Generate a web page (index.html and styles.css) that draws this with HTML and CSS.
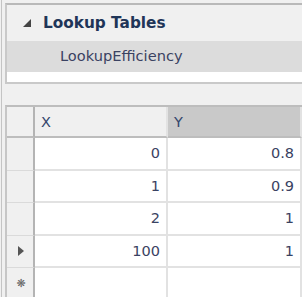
FILE: index.html
```html
<!DOCTYPE html>
<html lang="en">
<head>
    <meta charset="UTF-8">
    <title>Lookup Tables</title>
    <link rel="stylesheet" href="styles.css">
</head>
<body>

<div class="frame">
    <!-- 樹狀清單 -->
    <div class="tree-panel">
        <div class="tree-group">
            <span class="expander"></span>
            <span class="group-title">Lookup Tables</span>
        </div>
        <div class="tree-item selected">LookupEfficiency</div>
        <div class="tree-spacer"></div>
    </div>

    <!-- 資料表格 -->
    <div class="grid">
        <div class="grid-row header">
            <div class="row-head"></div>
            <div class="cell col-x">X</div>
            <div class="cell col-y active">Y</div>
        </div>
        <div class="grid-row">
            <div class="row-head"></div>
            <div class="cell col-x num">0</div>
            <div class="cell col-y num">0.8</div>
        </div>
        <div class="grid-row">
            <div class="row-head"></div>
            <div class="cell col-x num">1</div>
            <div class="cell col-y num">0.9</div>
        </div>
        <div class="grid-row">
            <div class="row-head"></div>
            <div class="cell col-x num">2</div>
            <div class="cell col-y num">1</div>
        </div>
        <div class="grid-row">
            <div class="row-head"><span class="current"></span></div>
            <div class="cell col-x num">100</div>
            <div class="cell col-y num">1</div>
        </div>
        <div class="grid-row">
            <div class="row-head"><span class="new-row">&#x274B;</span></div>
            <div class="cell col-x"></div>
            <div class="cell col-y"></div>
        </div>
    </div>
</div>

</body>
</html>
```

FILE: styles.css
```css
/* ========= 全域設定 ========= */
:root {
  --panel-bg: #f0f0f0;
  --line: #dadada;
  --text: #3a4262;
}

body {
  margin: 0;
  background-color: var(--panel-bg);
  font-family: "DejaVu Sans", Verdana, sans-serif;
  color: var(--text);
  overflow: hidden;
}

.frame {
  margin-left: 1px;
  border-left: 1px solid #c4c4c4;
  padding: 3px 0 0 3px;
  height: 294px;
}

/* ========= 樹狀清單 ========= */
.tree-panel {
  border-top: 2px solid #b9b9b9;
  border-left: 2px solid #c9c9c9;
  border-bottom: 2px solid #c9c9c9;
  background-color: var(--panel-bg);
}

.tree-group {
  height: 36px;
  display: flex;
  align-items: center;
}

.expander {
  width: 0;
  height: 0;
  margin-left: 16px;
  margin-right: 12px;
  border-left: 8px solid transparent;
  border-bottom: 8px solid #444;
}

.group-title {
  font-weight: bold;
  font-size: 15.3px;
  color: #1f3558;
}

.tree-item {
  height: 31px;
  line-height: 30px;
  padding-left: 53px;
  font-size: 14.6px;
}

.tree-item.selected {
  background-color: #dcdcdc;
}

.tree-spacer {
  height: 10px;
  background-color: #fff;
}

/* ========= 資料表格 ========= */
.grid {
  margin-top: 21px;
  border-top: 2px solid #bdbdbd;
  border-left: 2px solid #c6c6c6;
  background-color: #fff;
}

.grid-row {
  display: grid;
  grid-template-columns: 28px 133px 1fr;
  height: 32.5px;
  font-size: 14.5px;
}

.row-head {
  background-color: var(--panel-bg);
  border-right: 2px solid #b4b4b4;
  border-bottom: 1px solid var(--line);
  display: flex;
  align-items: center;
  justify-content: center;
}

.cell {
  border-bottom: 2px solid #e2e2e2;
  border-right: 2px solid #e2e2e2;
  padding: 0 6px;
  display: flex;
  align-items: center;
}

.grid-row.header {
  height: 31px;
}

.header .row-head,
.header .cell {
  background-color: var(--panel-bg);
  border-bottom: 2px solid #bdbdbd;
}

.header .cell {
  padding-left: 6px;
  color: #34466c;
}

.header .cell.active {
  background-color: #c9c9c9;
}

.num {
  justify-content: flex-end;
}

.current {
  width: 0;
  height: 0;
  margin-left: 2px;
  border-top: 5px solid transparent;
  border-bottom: 5px solid transparent;
  border-left: 6px solid #555;
}

.new-row {
  font-size: 11px;
  color: #666;
  margin-left: 2px;
}
```
